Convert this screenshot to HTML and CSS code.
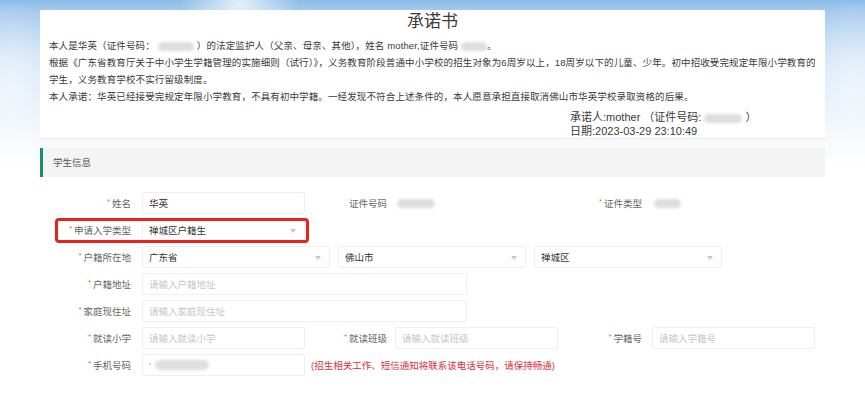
FILE: index.html
```html
<!DOCTYPE html>
<html lang="zh-CN">
<head>
<meta charset="utf-8">
<title>承诺书</title>
<link rel="stylesheet" href="styles.css">
</head>
<body>
<div class="page">
  <section class="pledge">
    <h1 class="pledge-title">承诺书</h1>
    <p class="pledge-text">本人是华英（证件号码：<span class="blur b1"></span>）的法定监护人（父亲、母亲、其他），姓名 mother,证件号码 <span class="blur b2"></span>。</p>
    <p class="pledge-text">根据《广东省教育厅关于中小学生学籍管理的实施细则（试行）》，义务教育阶段普通中小学校的招生对象为6周岁以上，18周岁以下的儿童、少年。初中招收受完规定年限小学教育的学生，义务教育学校不实行留级制度。</p>
    <p class="pledge-text">本人承诺：华英已经接受完规定年限小学教育，不具有初中学籍。一经发现不符合上述条件的，本人愿意承担直接取消佛山市华英学校录取资格的后果。</p>
    <div class="sign">
      <div>承诺人:mother （证件号码: <span class="blur b3"></span> ）</div>
      <div>日期:2023-03-29 23:10:49</div>
    </div>
  </section>

  <div class="section-head">学生信息</div>

  <div class="form">
    <div class="row">
      <div class="label l1"><span class="req">*</span>姓名</div>
      <div class="input w163">华英</div>
      <div class="label l2">证件号码</div>
      <div class="value w163"><span class="blur b4"></span></div>
      <div class="label l3"><span class="req">*</span>证件类型</div>
      <div class="value w163"><span class="blur b5"></span></div>
    </div>

    <div class="row">
      <div class="label l1"><span class="req">*</span>申请入学类型</div>
      <div class="input select w163">禅城区户籍生</div>
      <div class="highlight"></div>
    </div>

    <div class="row">
      <div class="label l1"><span class="req">*</span>户籍所在地</div>
      <div class="input select w188">广东省</div>
      <div class="input select w188 gap8">佛山市</div>
      <div class="input select w188 gap8">禅城区</div>
    </div>

    <div class="row">
      <div class="label l1"><span class="req">*</span>户籍地址</div>
      <div class="input placeholder w325">请输入户籍地址</div>
    </div>

    <div class="row">
      <div class="label l1"><span class="req">*</span>家庭现住址</div>
      <div class="input placeholder w325">请输入家庭现住址</div>
    </div>

    <div class="row">
      <div class="label l1"><span class="req">*</span>就读小学</div>
      <div class="input placeholder w163">请输入就读小学</div>
      <div class="label l2"><span class="req">*</span>就读班级</div>
      <div class="input placeholder w163">请输入就读班级</div>
      <div class="label l3"><span class="req">*</span>学籍号</div>
      <div class="input placeholder w163">请输入学籍号</div>
    </div>

    <div class="row">
      <div class="label l1"><span class="req">*</span>手机号码</div>
      <div class="input w163"><span class="tick">'</span><span class="blur b6"></span></div>
      <div class="hint">(招生相关工作、短信通知将联系该电话号码，请保持畅通)</div>
    </div>
  </div>
</div>
</body>
</html>
```

FILE: styles.css
```css
html, body {
  margin: 0;
  padding: 0;
}

body {
  width: 865px;
  height: 397px;
  overflow: hidden;
  font-family: "Liberation Sans", "Noto Sans CJK SC", sans-serif;
  color: #333;
  background:
    radial-gradient(ellipse 60px 40px at 240px 4px, rgba(255,255,255,0.75), rgba(255,255,255,0)),
    radial-gradient(ellipse 50px 90px at 10px 90px, rgba(255,255,255,0.55), rgba(255,255,255,0)),
    radial-gradient(ellipse 50px 90px at 855px 90px, rgba(255,255,255,0.55), rgba(255,255,255,0)),
    linear-gradient(180deg, #8bbbe7 0px, #a6cbee 12px, #cfe3f6 55px, #e6f0fa 110px, #f6f9fd 140px, #ffffff 165px);
}

.page {
  margin-left: 40px;
  width: 785px;
  padding-top: 10px;
}

/* ---------- pledge card ---------- */
.pledge {
  box-sizing: border-box;
  height: 129px;
  padding: 2px 9px 0;
  background: #fff;
  border-bottom: 1px solid #ececec;
}

.pledge-title {
  margin: 0 0 5px;
  font-size: 17px;
  font-weight: normal;
  line-height: 20px;
  text-align: center;
  color: #3a3a3a;
}

.pledge-text {
  margin: 0;
  font-size: 9.5px;
  line-height: 17px;
  letter-spacing: 0.12px;
  color: #3a3a3a;
}

.sign {
  margin-top: 5px;
  padding-left: 521px;
  font-size: 11px;
  line-height: 14px;
  color: #3a3a3a;
}

/* ---------- blurred private values ---------- */
.blur {
  display: inline-block;
  vertical-align: middle;
  height: 9px;
  background: #dedede;
  border-radius: 5px;
  filter: blur(1.5px);
}
.b1 { width: 36px; margin: 0 3px; }
.b2 { width: 26px; }
.b3 { width: 38px; }
.b4 { width: 38px; }
.b5 { width: 27px; }
.b6 { width: 54px; height: 10px; margin-left: 4px; }

/* ---------- section header ---------- */
.section-head {
  box-sizing: border-box;
  margin-top: 9px;
  height: 29px;
  line-height: 29px;
  padding-left: 10px;
  background: #f4f4f4;
  border-left: 3px solid #16906e;
  font-size: 9.5px;
  color: #555;
}

/* ---------- form ---------- */
.form {
  padding-top: 15px;
}

.row {
  position: relative;
  display: flex;
  align-items: center;
  height: 22px;
  margin-bottom: 5px;
}

.label {
  flex: none;
  box-sizing: border-box;
  text-align: right;
  padding-right: 11px;
  font-size: 9.5px;
  color: #666;
  white-space: nowrap;
}
.l1 { width: 102px; }
.l2 { width: 90px; padding-right: 8px; }
.l3 { width: 94px; padding-right: 10px; }

.req {
  color: #f0505a;
  font-size: 7px;
  vertical-align: 3px;
  margin-right: 2px;
}

.input,
.value {
  flex: none;
  box-sizing: border-box;
  height: 22px;
  display: flex;
  align-items: center;
  padding-left: 6px;
  font-size: 9.5px;
  color: #333;
  white-space: nowrap;
}

.input {
  background: #fff;
  border: 1px solid #efefef;
  border-radius: 2px;
}

.value {
  padding-left: 2px;
}

.placeholder {
  color: #c6c6c6;
}

.w163 { width: 163px; }
.w188 { width: 188px; }
.w325 { width: 325px; }
.gap8 { margin-left: 8px; }

.select {
  position: relative;
}
.select::after {
  content: "";
  position: absolute;
  right: 8px;
  top: 9px;
  border-left: 3.5px solid transparent;
  border-right: 3.5px solid transparent;
  border-top: 4px solid #c8c8c8;
}

.tick {
  color: #999;
}

.hint {
  margin-left: 6px;
  font-size: 9.5px;
  color: #e0313c;
  white-space: nowrap;
}

.highlight {
  position: absolute;
  left: 15px;
  top: -1px;
  width: 254px;
  height: 25px;
  box-sizing: border-box;
  border: 3px solid #e8231f;
  border-radius: 4px;
  pointer-events: none;
}
```
